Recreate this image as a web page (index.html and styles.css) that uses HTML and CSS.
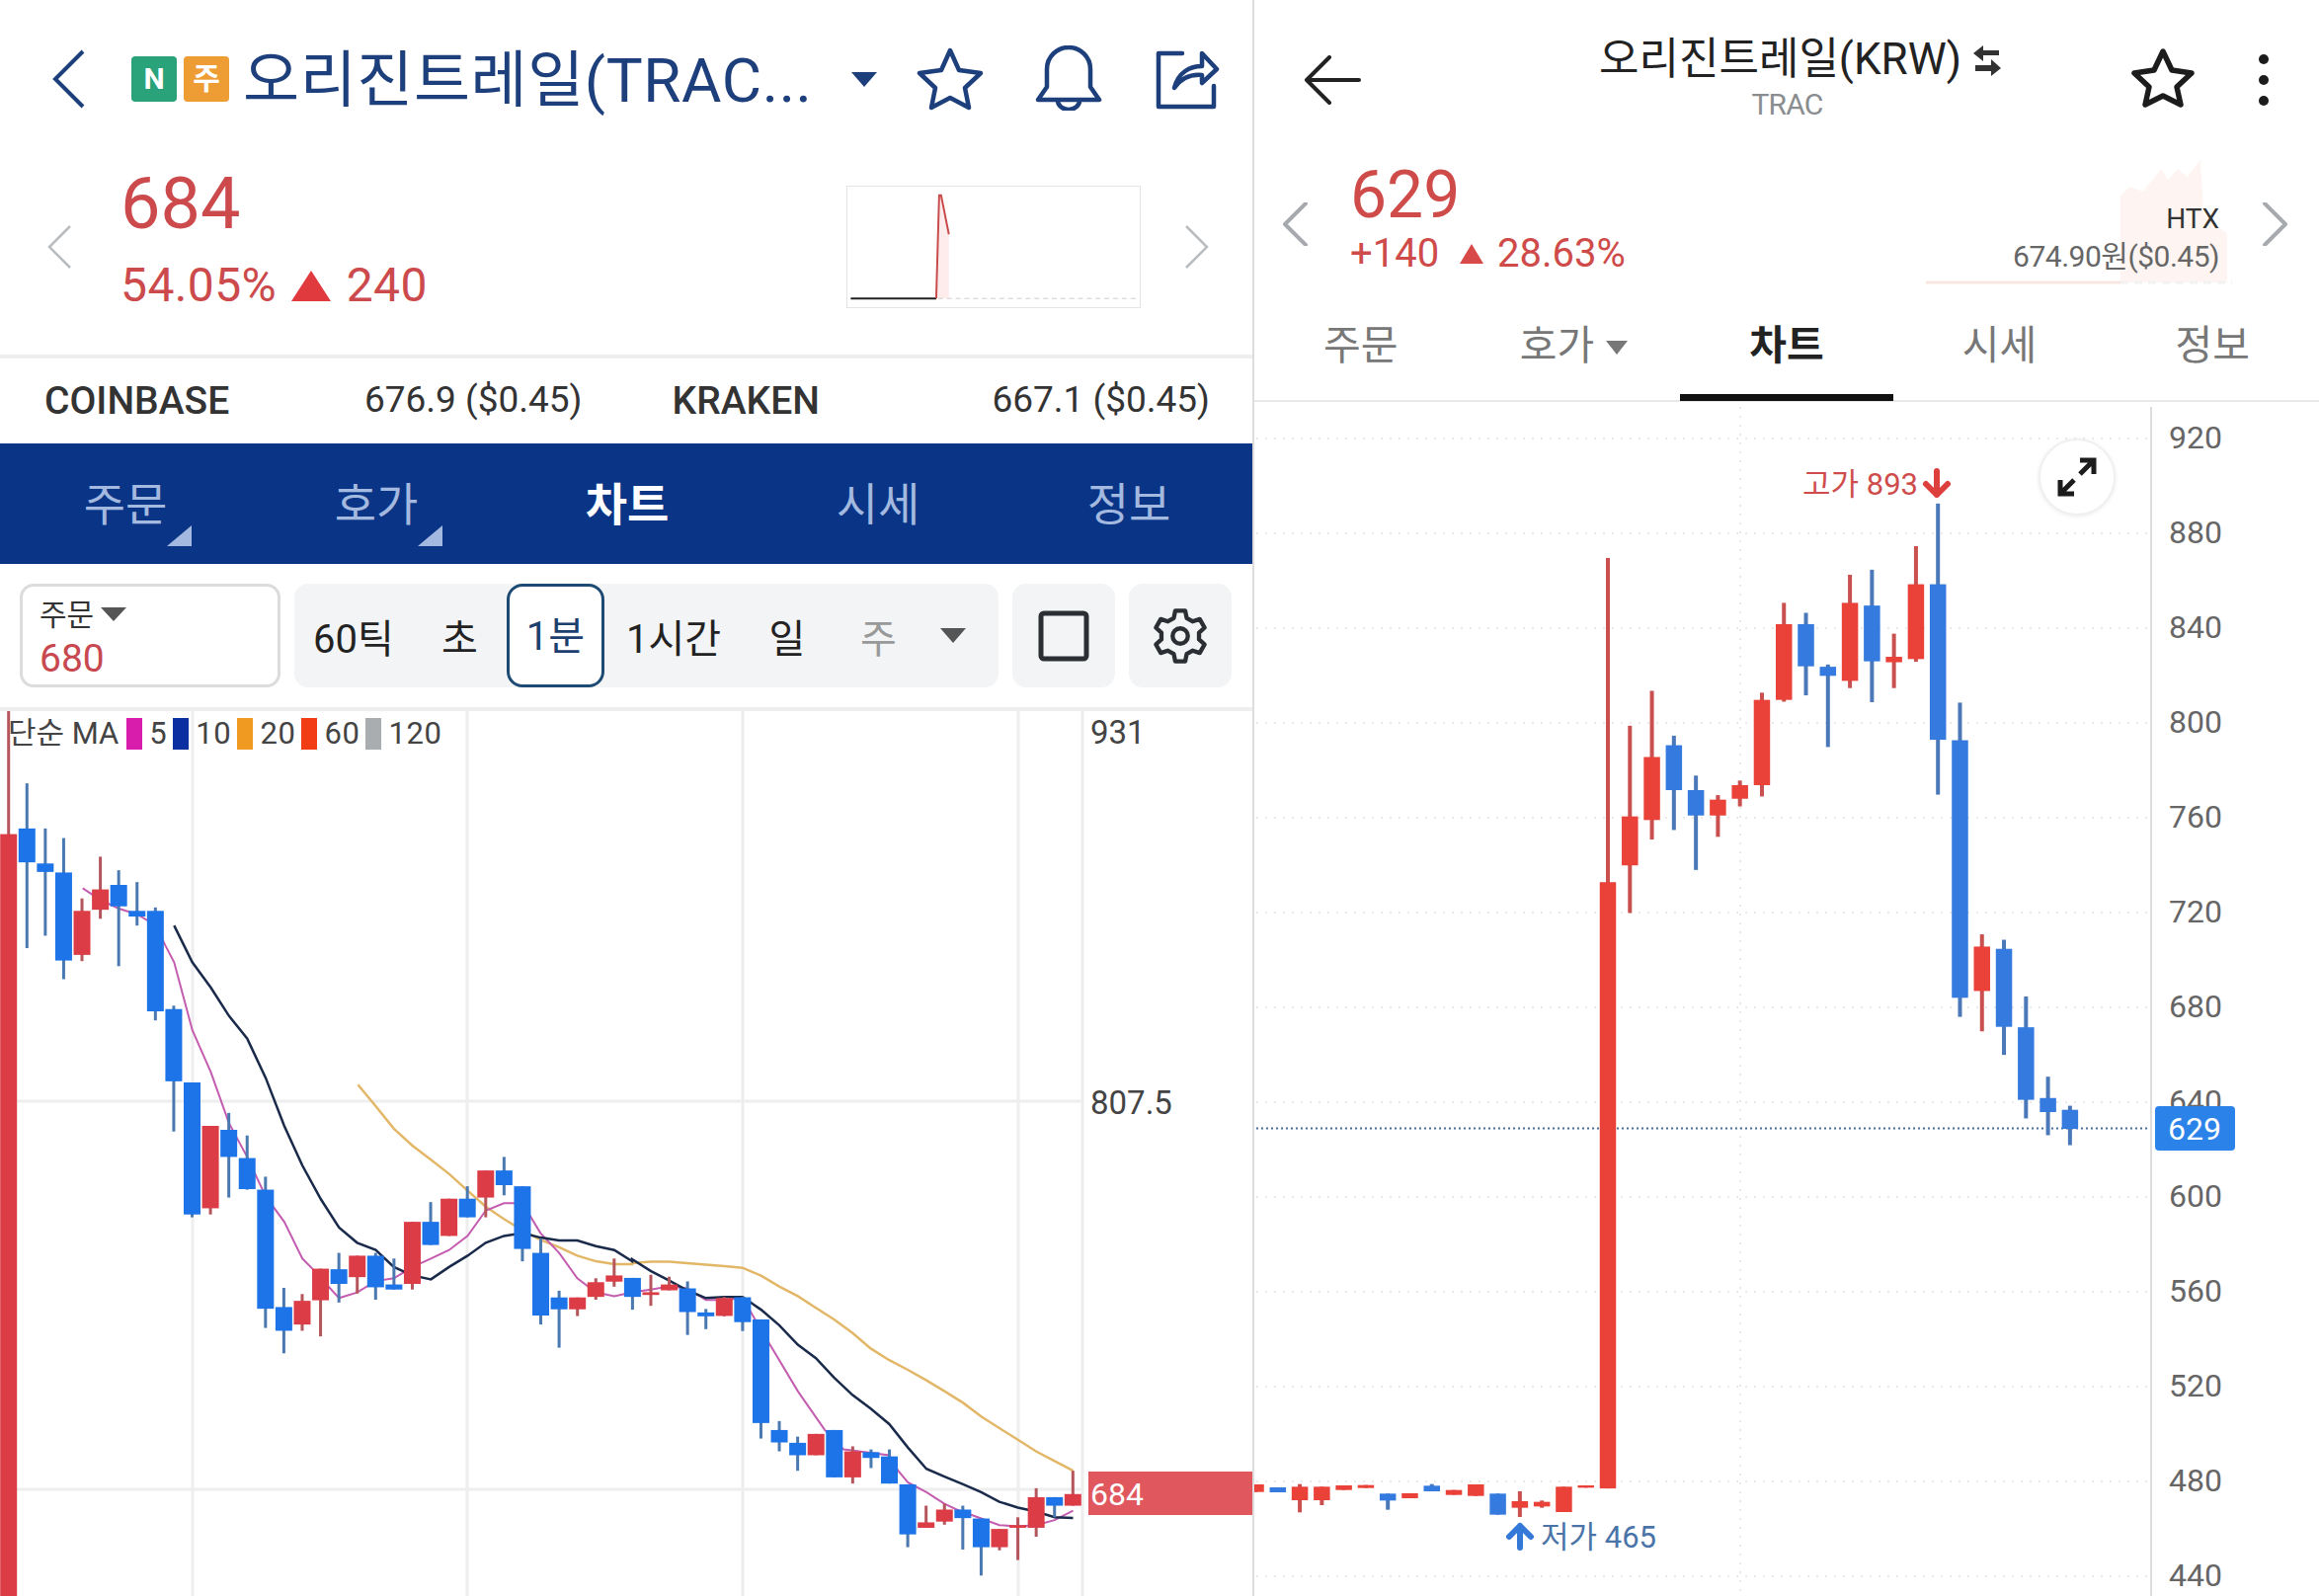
FILE: index.html
```html
<!DOCTYPE html>
<html lang="ko">
<head>
  <meta charset="UTF-8" />
  <title>오리진트레일 TRAC</title>
  <link rel="stylesheet" href="styles.css">
</head>
<body>

  <!-- left app -->
  <section class="panel panel-left">
    <header class="top-left">
      <svg class="back-chevron" viewBox="0 0 36 60"><path d="M32 2 L4 30 L32 58" /></svg>
      <span class="badge badge-n">N</span>
      <span class="badge badge-j">주</span>
      <h1 class="coin-title">오리진트레일(TRAC...</h1>
      <span class="title-arrow"></span>
      <svg class="navy-icon star-left" viewBox="0 0 68 64"><path d="M34 3 L43 23 L65 26 L49 41 L53 61 L34 51 L15 61 L19 41 L3 26 L25 23 Z" /></svg>
      <svg class="navy-icon bell" viewBox="0 0 68 66"><path d="M3 55 L12 42 V24 A22 22 0 0 1 56 24 V42 L65 55 Z" /><path d="M23 56 A11 9 0 0 0 45 56" /></svg>
      <svg class="navy-icon share" viewBox="0 0 66 62"><path d="M28 5 H4 V59 H60 V38" /><path d="M20 40 C24 24 36 18 48 18 V5 L63 21 L48 35 V27 C36 26 27 30 20 40 Z" /></svg>
    </header>

    <div class="price-left">
      <svg class="side-chevron" viewBox="0 0 25 44"><path d="M23 1 L2 22 L23 43" /></svg>
      <div class="price-block">
        <div class="price-big">684</div>
        <div class="price-sub">54.05% <span class="tri-up"></span> 240</div>
      </div>
      <svg class="mini-chart" viewBox="0 0 298 124">
        <path class="mini-fill" d="M91 115 L93 9 L95 9 L103 49 L103 115 Z" />
        <path class="mini-dash" d="M92 115 H296" />
        <path class="mini-base" d="M2 115 H90" />
        <path class="mini-line" d="M90 115 L93 9 L95 9 L103 49" />
      </svg>
      <svg class="side-chevron side-chevron-right" viewBox="0 0 25 44"><path d="M2 1 L23 22 L2 43" /></svg>
    </div>

    <div class="exchanges">
      <div class="exchange"><strong>COINBASE</strong><span>676.9 ($0.45)</span></div>
      <div class="exchange"><strong>KRAKEN</strong><span>667.1 ($0.45)</span></div>
    </div>

    <nav class="tabs-blue">
      <a class="has-corner">주문</a>
      <a class="has-corner">호가</a>
      <a class="active">차트</a>
      <a>시세</a>
      <a>정보</a>
    </nav>

    <div class="toolbar">
      <div class="order-box">
        <div class="order-label">주문<span class="order-arrow"></span></div>
        <div class="order-value">680</div>
      </div>
      <div class="segments">
        <span>60틱</span>
        <span>초</span>
        <span class="selected">1분</span>
        <span>1시간</span>
        <span>일</span>
        <span class="muted">주</span>
        <span class="seg-arrow"></span>
      </div>
      <button class="tool-btn"><svg class="tool-icon" viewBox="0 0 52 52"><rect x="3" y="3" width="46" height="46" rx="3" /></svg></button>
      <button class="tool-btn"><svg class="tool-icon gear" viewBox="0 0 60 60">
        <path d="M23.2 11.2 L24.8 3.5 L35.2 3.5 L36.8 11.2 L42.9 14.7 L50.4 12.3 L55.5 21.2 L49.7 26.5 L49.7 33.5 L55.5 38.8 L50.4 47.7 L42.9 45.3 L36.8 48.8 L35.2 56.5 L24.8 56.5 L23.2 48.8 L17.1 45.3 L9.6 47.7 L4.5 38.8 L10.3 33.5 L10.3 26.5 L4.5 21.2 L9.6 12.3 L17.1 14.7 Z" />
        <circle cx="30" cy="30" r="8" />
      </svg></button>
    </div>

    <div class="chart">
      <svg class="chart-svg" viewBox="0 720 1270 896">
        <g class="grid-left">
          <path d="M195 720 V1616 M473 720 V1616 M752 720 V1616 M1031 720 V1616" />
          <path d="M0 1115 H1096 M0 1508 H1096" />
          <path d="M1096 720 V1616" />
        </g>
        <g id="leftChart"></g>
        <rect class="last-box" x="1102" y="1490" width="167" height="44" />
        <text class="axis-left" x="1104" y="741">931</text>
        <text class="axis-left" x="1104" y="1116">807.5</text>
        <text class="axis-last" x="1104" y="1513">684</text>
      </svg>
      <div class="legend">
        <span class="legend-name">단순 MA</span>
        <i class="swatch sw-5"></i><span>5</span>
        <i class="swatch sw-10"></i><span>10</span>
        <i class="swatch sw-20"></i><span>20</span>
        <i class="swatch sw-60"></i><span>60</span>
        <i class="swatch sw-120"></i><span>120</span>
      </div>
    </div>
  </section>

  <!-- right app -->
  <section class="panel panel-right">
    <header class="top-right">
      <svg class="back-arrow" viewBox="0 0 58 50"><path d="M56 25 H3 M26 2 L3 25 L26 48" /></svg>
      <div class="title-block">
        <h2 class="krw-title">오리진트레일(KRW)
          <svg class="swap" viewBox="0 0 28 32"><path class="swap-fill" d="M0 9 L10 1 V6 H26 V11 H10 V17 Z" /><path class="swap-fill" d="M28 24 L18 32 V27 H2 V21 H18 V15 Z" /></svg>
        </h2>
        <div class="krw-sub">TRAC</div>
      </div>
      <div class="top-right-icons">
        <svg class="star-right" viewBox="0 0 64 60"><path d="M32 3 L41 22 L61 25 L46 39 L50 57 L32 48 L14 57 L18 39 L3 25 L23 22 Z" /></svg>
        <span class="dots"><i></i><i></i><i></i></span>
      </div>
    </header>

    <div class="price-right">
      <svg class="side-chevron-dark" viewBox="0 0 25 44"><path d="M23 1 L2 22 L23 43" /></svg>
      <div class="price-block-right">
        <div class="price-big-right">629</div>
        <div class="price-sub-right">+140 <span class="tri-up tri-small"></span> 28.63%</div>
      </div>
      <svg class="spark" viewBox="0 0 310 128">
        <path class="spark-fill" d="M197 125 L197 37 L207 28 L220 33 L238 10 L245 21 L255 10 L265 18 L278 1 L281 56 L305 76 L305 125 Z" />
        <path class="spark-base" d="M0 125 H197" />
        <path class="spark-dash" d="M197 125 H310" />
      </svg>
      <div class="htx">
        <div class="htx-name">HTX</div>
        <div class="htx-value">674.90원($0.45)</div>
      </div>
      <svg class="side-chevron-dark" viewBox="0 0 25 44"><path d="M2 1 L23 22 L2 43" /></svg>
    </div>

    <nav class="tabs-plain">
      <a>주문</a>
      <a>호가<span class="tab-arrow"></span></a>
      <a class="active">차트</a>
      <a>시세</a>
      <a>정보</a>
    </nav>

    <div class="chart">
      <svg class="chart-svg" viewBox="1270 407 1078 1209">
        <g class="grid-right" id="rightGrid"></g>
        <g id="rightAxis"></g>
        <path class="price-line" d="M1272 1142.5 H2178" />
        <g id="rightChart"></g>
        <path class="axis-line" d="M2178 412 V1616" />
        <rect class="now-box" x="2182" y="1120" width="81" height="45" rx="4" />
        <text class="now-text" x="2222" y="1143">629</text>
        <text class="mark-high" x="1825" y="490">고가 893</text>
        <path class="mark-high-arrow" d="M1961 477 V501 M1950 490 L1961 501 L1972 490" />
        <path class="mark-low-arrow" d="M1539 1567 V1545 M1528 1556 L1539 1545 L1550 1556" />
        <text class="mark-low" x="1560" y="1556">저가 465</text>
      </svg>
      <button class="expand-btn">
        <svg viewBox="0 0 42 42"><path d="M24 18 L36 6 M24 4 H38 V18 M18 24 L6 36 M4 24 V38 H18" /></svg>
      </button>
    </div>
  </section>

  <script src="script.js"></script>
</body>
</html>
```

FILE: styles.css
```css
html, body {
  margin: 0;
  padding: 0;
  height: 1616px;
  overflow: hidden;
  background: #fff;
  font-family: Roboto, "Noto Sans CJK KR", sans-serif;
  color: #333;
}
body {
  display: flex;
}
.panel {
  display: flex;
  flex-direction: column;
  height: 1616px;
}
.panel-left {
  width: 1270px;
}
.panel-right {
  position: relative;
  flex: 1;
  box-shadow: -2px 0 0 #ddd;
}
h1, h2 {
  margin: 0;
  font-weight: 400;
}

/* left header */
.top-left {
  display: flex;
  align-items: center;
  height: 160px;
  padding-left: 52px;
  color: #1d3f7c;
  box-sizing: border-box;
}
.back-chevron {
  width: 36px;
  height: 60px;
  margin-right: 45px;
  fill: none;
  stroke: #1d3f7c;
  stroke-width: 4;
}
.badge {
  width: 46px;
  height: 46px;
  border-radius: 4px;
  color: #fff;
  font-size: 30px;
  font-weight: 700;
  line-height: 46px;
  text-align: center;
  margin-right: 7px;
}
.badge-n { background: #2aa37a; }
.badge-j { background: #ee9c34; }
.coin-title {
  width: 600px;
  margin-left: 7px;
  font-size: 62px;
  line-height: 80px;
  letter-spacing: 0.6px;
  white-space: nowrap;
  margin-top: 4px;
}
.title-arrow {
  width: 0;
  height: 0;
  border-left: 13px solid transparent;
  border-right: 13px solid transparent;
  border-top: 15px solid #1d3f7c;
  margin-left: 16px;
}
.navy-icon {
  fill: none;
  stroke: #1d3f7c;
  stroke-width: 4.5;
  stroke-linejoin: round;
  stroke-linecap: round;
}
.star-left { width: 68px; height: 64px; margin-left: 40px; }
.bell { width: 68px; height: 66px; margin: -2px 0 0 52px; }
.share { width: 66px; height: 62px; margin-left: 53px; }

/* left price */
.price-left {
  display: flex;
  align-items: center;
  height: 203px;
  padding: 0 46px 20px 48px;
  border-bottom: 4px solid #eee;
  box-sizing: border-box;
}
.side-chevron {
  width: 25px;
  height: 44px;
  margin-right: 49px;
  fill: none;
  stroke: #b9bdc0;
  stroke-width: 2.5;
  flex-shrink: 0;
}
.side-chevron-right {
  margin: 0 0 0 44px;
}
.price-block {
  margin-bottom: 15px;
  color: #cc4a4c;
}
.price-big {
  font-size: 72px;
  line-height: 80px;
}
.price-sub {
  margin-top: 14px;
  font-size: 48px;
  line-height: 56px;
  letter-spacing: 0.4px;
  white-space: nowrap;
}
.tri-up {
  display: inline-block;
  width: 0;
  height: 0;
  border-left: 20px solid transparent;
  border-right: 20px solid transparent;
  border-bottom: 31px solid #e0393e;
  margin: 0 3px;
}
.tri-small {
  border-left-width: 12px;
  border-right-width: 12px;
  border-bottom-width: 20px;
  border-bottom-color: #d84a48;
  margin: 0 4px 0 11px;
  vertical-align: 3px;
}
.price-sub-right {
  letter-spacing: 0;
}
.mini-chart {
  width: 298px;
  height: 124px;
  margin-left: auto;
  border: 1px solid #e4e4e4;
  box-sizing: border-box;
}
.mini-fill { fill: #fdeceb; }
.mini-dash { fill: none; stroke: #ddd; stroke-width: 1.5; stroke-dasharray: 5 4; }
.mini-base { fill: none; stroke: #222; stroke-width: 2; }
.mini-line { fill: none; stroke: #c84a4a; stroke-width: 2; }

/* exchanges */
.exchanges {
  display: grid;
  grid-template-columns: 1fr 1fr;
  gap: 91px;
  align-items: center;
  height: 86px;
  padding: 0 45px 0 45px;
  font-size: 37px;
  color: #333;
  flex-shrink: 0;
}
.exchange {
  display: flex;
  justify-content: space-between;
  white-space: nowrap;
}
.exchange strong {
  font-weight: 500;
  font-size: 39px;
}
/* left tabs */
.tabs-blue {
  display: flex;
  height: 122px;
  background: #0a3587;
  flex-shrink: 0;
}
.tabs-blue a {
  position: relative;
  flex: 1;
  text-align: center;
  font-size: 46px;
  line-height: 124px;
  color: #a3b9df;
}
.tabs-blue a.active {
  color: #fff;
  font-weight: 700;
}
.has-corner::after {
  content: "";
  position: absolute;
  right: 60px;
  bottom: 18px;
  width: 25px;
  height: 21px;
  background: #a3b9df;
  clip-path: polygon(100% 0, 100% 100%, 0 100%);
}

/* toolbar */
.toolbar {
  display: flex;
  gap: 14px;
  height: 149px;
  padding: 20px 20px 0;
  border-bottom: 4px solid #eee;
  box-sizing: border-box;
  flex-shrink: 0;
}
.order-box {
  width: 264px;
  height: 105px;
  border: 3px solid #dcdcdc;
  border-radius: 14px;
  padding-left: 17px;
  box-sizing: border-box;
  flex-shrink: 0;
}
.order-label {
  font-size: 30px;
  line-height: 38px;
  margin-top: 10px;
  color: #333;
}
.order-arrow {
  display: inline-block;
  width: 0;
  height: 0;
  border-left: 13px solid transparent;
  border-right: 13px solid transparent;
  border-top: 14px solid #555;
  margin-left: 7px;
  vertical-align: 4px;
}
.order-value {
  font-size: 39px;
  line-height: 50px;
  color: #c8484f;
}
.segments {
  display: grid;
  grid-template-columns: 120px 95px 99px 140px 90px 95px 1fr;
  align-items: center;
  width: 713px;
  height: 105px;
  background: #f2f4f6;
  border-radius: 14px;
  font-size: 40px;
  color: #222;
  text-align: center;
  flex-shrink: 0;
}
.segments .selected {
  height: 105px;
  line-height: 102px;
  border: 3px solid #1d4a72;
  border-radius: 16px;
  box-sizing: border-box;
  background: #fff;
  color: #1d3f6e;
}
.segments .muted {
  color: #999;
}
.seg-arrow {
  width: 0;
  height: 0;
  border-left: 13px solid transparent;
  border-right: 13px solid transparent;
  border-top: 15px solid #555;
  margin-left: 15px;
}
.tool-btn {
  display: flex;
  align-items: center;
  justify-content: center;
  width: 104px;
  height: 105px;
  padding: 0;
  border: none;
  border-radius: 14px;
  background: #f2f4f6;
}
.tool-icon {
  width: 52px;
  height: 52px;
  fill: none;
  stroke: #2b2f33;
  stroke-width: 5;
}
.gear {
  width: 58px;
  height: 58px;
  stroke-width: 4.5;
  stroke-linejoin: round;
}

/* charts */
.chart {
  position: relative;
  flex: 1;
  min-height: 0;
  overflow: hidden;
}
.chart-svg {
  position: absolute;
  left: 0;
  top: 0;
  width: 100%;
  height: 100%;
}
.chart-svg text {
  dominant-baseline: central;
  font-size: 32px;
}
.grid-left path {
  fill: none;
  stroke: #eeeeee;
  stroke-width: 3;
}
.axis-left { fill: #444; }
.chart-svg .axis-left { font-size: 33px; }
.axis-last { fill: #fff; }
.last-box { fill: #e0575e; }
.legend {
  position: absolute;
  left: 8px;
  top: 7px;
  display: flex;
  align-items: center;
  font-size: 31px;
  line-height: 32px;
  letter-spacing: 0.6px;
  color: #444;
}
.legend-name {
  margin-right: 2px;
  letter-spacing: 0;
  white-space: nowrap;
}
.swatch {
  width: 16px;
  height: 32px;
  margin: 0 7px 0 0;
}
.legend span + .swatch {
  margin-left: 6px;
}
.sw-5 { background: #d81cab; }
.sw-10 { background: #0b2ea0; }
.sw-20 { background: #f09a22; }
.sw-60 { background: #f23c15; }
.sw-120 { background: #aaadb0; }

/* right header */
.top-right {
  display: grid;
  grid-template-columns: 1fr auto 1fr;
  align-items: center;
  height: 142px;
  padding: 0 49px 0 50px;
  flex-shrink: 0;
}
.back-arrow {
  width: 58px;
  height: 50px;
  fill: none;
  stroke: #222;
  stroke-width: 4;
  stroke-linecap: round;
  stroke-linejoin: round;
  margin-top: 20px;
}
.title-block {
  position: relative;
  text-align: center;
}
.krw-title {
  position: relative;
  left: -7px;
  font-size: 44px;
  line-height: 60px;
  color: #222;
  white-space: nowrap;
  margin-top: 13px;
}
.swap {
  position: absolute;
  left: calc(100% + 12px);
  top: 15px;
  width: 28px;
  height: 32px;
}
.swap-fill { fill: #333; }
.krw-sub {
  font-size: 30px;
  line-height: 38px;
  letter-spacing: -0.8px;
  color: #8a8d90;
  margin-top: -3px;
}
.top-right-icons {
  display: flex;
  align-items: center;
  justify-content: flex-end;
  margin-top: 20px;
}
.star-right {
  width: 64px;
  height: 60px;
  margin-top: -4px;
  fill: none;
  stroke: #1c1c1c;
  stroke-width: 5.5;
  stroke-linejoin: round;
}
.dots {
  display: flex;
  flex-direction: column;
  gap: 11px;
  margin: 0 2px 0 65px;
}
.dots i {
  width: 10px;
  height: 10px;
  border-radius: 50%;
  background: #1c1c1c;
}

/* right price */
.price-right {
  position: relative;
  display: flex;
  align-items: center;
  height: 158px;
  padding: 0 32px 0 29px;
  flex-shrink: 0;
}
.side-chevron-dark {
  width: 25px;
  height: 44px;
  fill: none;
  stroke: #a6aaae;
  stroke-width: 4;
  stroke-linecap: round;
  stroke-linejoin: round;
  flex-shrink: 0;
  margin-top: 12px;
}
.price-block-right {
  margin-left: 43px;
  color: #cf4b4a;
}
.price-big-right {
  font-size: 66px;
  line-height: 70px;
}
.price-sub-right {
  font-size: 40px;
  line-height: 46px;
  margin-top: 1px;
  white-space: nowrap;
}
.spark {
  position: absolute;
  left: 680px;
  top: 19px;
  width: 310px;
  height: 128px;
}
.spark-fill { fill: #fef5f2; }
.spark-base { fill: none; stroke: #f9e6e0; stroke-width: 3; }
.spark-dash { fill: none; stroke: #f2f2f2; stroke-width: 3; stroke-dasharray: 8 6; }
.htx {
  position: relative;
  margin-left: auto;
  margin-right: 44px;
  text-align: right;
  margin-top: 41px;
}
.htx-name {
  font-size: 28px;
  line-height: 36px;
  color: #333;
}
.htx-value {
  font-size: 30px;
  line-height: 40px;
  color: #666;
  white-space: nowrap;
  letter-spacing: -0.5px;
}
.tabs-plain {
  display: flex;
  height: 107px;
  border-bottom: 2px solid #e8e8e8;
  box-sizing: border-box;
  flex-shrink: 0;
}
.tabs-plain a {
  flex: 1;
  text-align: center;
  font-size: 41px;
  line-height: 100px;
  color: #777;
}
.tabs-plain a.active {
  color: #222;
  font-weight: 700;
  height: 106px;
  border-bottom: 7px solid #111;
  box-sizing: border-box;
}
.tab-arrow {
  display: inline-block;
  width: 0;
  height: 0;
  border-left: 11px solid transparent;
  border-right: 11px solid transparent;
  border-top: 14px solid #777;
  margin-left: 12px;
  vertical-align: 5px;
}
.grid-right path {
  fill: none;
  stroke: #e9e9e9;
  stroke-width: 2;
  stroke-dasharray: 2 7;
}
.axis-right { fill: #666; }
.axis-line { fill: none; stroke: #ddd; stroke-width: 2; }
.price-line {
  fill: none;
  stroke: #4a6e9c;
  stroke-width: 2;
  stroke-dasharray: 2 3;
}
.now-box { fill: #2b83ea; }
.chart-svg .now-text { fill: #fff; text-anchor: middle; }
.chart-svg .mark-high { fill: #cf4c4c; font-size: 31px; }
.chart-svg .mark-low { fill: #4a74a8; font-size: 31px; }
.mark-high-arrow {
  fill: none;
  stroke: #dd3f3c;
  stroke-width: 6;
  stroke-linecap: round;
  stroke-linejoin: round;
}
.mark-low-arrow {
  fill: none;
  stroke: #3478d8;
  stroke-width: 6;
  stroke-linecap: round;
  stroke-linejoin: round;
}
.expand-btn {
  position: absolute;
  left: 794px;
  top: 37px;
  width: 78px;
  height: 78px;
  padding: 0;
  border: 2px solid #f0f0f0;
  border-radius: 50%;
  background: #fff;
  box-shadow: 0 1px 4px rgba(0, 0, 0, 0.08);
  display: flex;
  align-items: center;
  justify-content: center;
}
.expand-btn svg {
  width: 42px;
  height: 42px;
  fill: none;
  stroke: #1c1c1c;
  stroke-width: 5;
}
```

FILE: script.js
```js
const SVG_NS = 'http://www.w3.org/2000/svg';

function addNode(parent, tag, attrs) {
  const node = document.createElementNS(SVG_NS, tag);
  for (const key in attrs) node.setAttribute(key, attrs[key]);
  parent.appendChild(node);
  return node;
}

// [wickTop, bodyTop, bodyBottom, wickBottom, 'r' or 'b']
const leftUpper = [
  [0, 218, 1568, 1568, 'r'],
  [128, 208, 268, 420, 'b'], [208, 270, 285, 398, 'b'], [225, 286, 442, 475, 'b'],
  [332, 354, 432, 443, 'r'], [258, 316, 352, 368, 'r'], [282, 308, 346, 452, 'b'],
  [303, 354, 364, 380, 'b'], [348, 354, 532, 548, 'b'], [522, 528, 656, 745, 'b'],
  [658, 658, 892, 897, 'b'], [735, 735, 881, 892, 'r'], [712, 742, 790, 862, 'b'],
  [752, 792, 847, 848, 'b'], [825, 848, 1059, 1093, 'b'], [1022, 1056, 1098, 1138, 'b'],
  [1033, 1045, 1087, 1098, 'r'], [988, 988, 1044, 1108, 'r'], [960, 989, 1015, 1048, 'b'],
  [965, 965, 1003, 1032, 'r'], [960, 965, 1021, 1043, 'b'], [970, 1016, 1025, 1025, 'b'],
  [905, 905, 1015, 1025, 'r'], [870, 905, 946, 946, 'b'], [864, 864, 930, 930, 'r'],
  [842, 864, 897, 897, 'b'], [814, 814, 862, 897, 'r'], [790, 814, 840, 858, 'b'],
  [842, 842, 953, 975, 'b'], [935, 960, 1071, 1087, 'b'], [1027, 1039, 1060, 1128, 'b'],
  [1039, 1039, 1060, 1072, 'r'], [1005, 1012, 1038, 1043, 'r'], [970, 1000, 1011, 1020, 'r']
];
const leftLower = [
  [748, 748, 797, 830, 'b'], [740, 785, 792, 820, 'r'], [745, 765, 780, 780, 'r'],
  [757, 775, 836, 895, 'b'], [828, 837, 847, 880, 'b'], [797, 800, 846, 847, 'r'],
  [797, 798, 862, 885, 'b'], [855, 855, 1122, 1162, 'b'], [1117, 1140, 1172, 1195, 'b'],
  [1157, 1173, 1205, 1245, 'b'], [1150, 1150, 1205, 1205, 'r'], [1140, 1140, 1262, 1262, 'b'],
  [1182, 1195, 1262, 1278, 'r'], [1190, 1197, 1212, 1238, 'b'], [1190, 1208, 1278, 1278, 'b'],
  [1280, 1280, 1409, 1442, 'b'], [1335, 1378, 1392, 1392, 'r'], [1330, 1345, 1376, 1384, 'r'],
  [1335, 1345, 1367, 1448, 'b'], [1368, 1368, 1442, 1515, 'b'], [1395, 1395, 1442, 1450, 'r'],
  [1365, 1385, 1392, 1475, 'r'], [1290, 1313, 1392, 1415, 'r'], [1313, 1313, 1335, 1365, 'b'],
  [1245, 1305, 1335, 1335, 'r']
];
const rightUpper = [
  [185, 900, 2237, 2237, 'r'],
  [555, 755, 863, 968, 'r'], [478, 624, 763, 806, 'r'], [577, 598, 697, 785, 'b'],
  [665, 697, 753, 873, 'b'], [708, 718, 753, 800, 'r'], [676, 686, 716, 733, 'r'],
  [482, 498, 686, 711, 'r'], [284, 331, 498, 502, 'r'], [306, 331, 424, 488, 'b'],
  [420, 425, 445, 602, 'b'], [222, 284, 456, 472, 'r'], [211, 290, 413, 503, 'b'],
  [352, 403, 415, 472, 'r'], [159, 243, 408, 414, 'r'], [65, 243, 586, 707, 'b'],
  [504, 587, 1155, 1197, 'b'], [1015, 1042, 1140, 1229, 'r'], [1027, 1047, 1219, 1281, 'b'],
  [1152, 1220, 1380, 1421, 'b'], [1329, 1376, 1407, 1458, 'b'], [1393, 1402, 1444, 1480, 'b']
];
// the quiet stretch before the spike, newest first
const rightLower = [
  [372, 372, 379, 379, 'r'], [376, 376, 453, 453, 'r'], [418, 422, 436, 440, 'r'],
  [390, 420, 440, 468, 'r'], [397, 397, 461, 461, 'b'], [369, 369, 404, 404, 'r'],
  [386, 386, 401, 401, 'r'], [368, 373, 390, 390, 'b'], [396, 396, 411, 411, 'r'],
  [397, 397, 418, 446, 'b'], [371, 371, 380, 380, 'r'], [372, 372, 386, 386, 'r'],
  [376, 376, 417, 432, 'r'], [368, 376, 417, 454, 'r'], [378, 378, 393, 393, 'b'],
  [369, 369, 392, 392, 'r']
];

const leftStyle = { width: 17, wick: 3, r: '#dc3c46', b: '#1c74e8', rw: '#b5555c', bw: '#4a78b0' };
const rightStyle = { width: 16.5, wick: 4, r: '#ea4238', b: '#347adf', rw: '#c9504f', bw: '#4a78b8' };

function drawCandle(g, x, c, toY, style) {
  addNode(g, 'rect', {
    x: x - style.wick / 2, y: toY(c[0]), width: style.wick, height: toY(c[3]) - toY(c[0]),
    fill: style[c[4] + 'w']
  });
  addNode(g, 'rect', {
    x: x - style.width / 2, y: toY(c[1]), width: style.width, height: toY(c[2]) - toY(c[1]),
    fill: style[c[4]]
  });
}

const leftY1 = v => 720 + v / 1.75;
const leftY2 = v => 1000 + v / 2.545;
const leftG = document.getElementById('leftChart');

function drawLine(upper, lower, color, width) {
  const pts = upper.map(p => (p[0] / 2.45).toFixed(1) + ',' + leftY1(p[1]).toFixed(1))
    .concat(lower.map(p => (p[0] / 2.45 + 640).toFixed(1) + ',' + leftY2(p[1]).toFixed(1)));
  addNode(leftG, 'polyline', { points: pts.join(' '), fill: 'none', stroke: color, 'stroke-width': width });
}

// moving averages
drawLine(
  [[888,662],[932,700],[977,740],[1023,770],[1069,795],[1114,820],[1160,850],[1205,878],[1250,900],[1296,920],[1341,937],[1387,950],[1432,965],[1478,975],[1524,980],[1568,980]],
  [[0,710],[46,706],[92,706],[137,710],[183,714],[229,718],[274,722],[320,742],[365,770],[411,795],[456,825],[501,855],[547,890],[592,930],[638,960],[684,985],[730,1012],[775,1040],[821,1070],[866,1105],[911,1135],[957,1165],[1002,1195],[1048,1220],[1094,1245]],
  '#e3b768', 2.5
);
drawLine(
  [[205,314],[250,335],[295,350],[340,360],[387,380],[410,415],[432,445],[477,565],[523,640],[568,730],[613,790],[659,860],[705,905],[750,970],[775,988],[796,1005],[841,1040],[886,1030],[932,1010],[977,1005],[1023,985],[1069,970],[1114,955],[1160,930],[1205,885],[1250,872],[1296,872],[1341,925],[1387,960],[1432,1005],[1478,1030],[1524,1037],[1568,1030]],
  [[46,778],[92,770],[137,775],[183,805],[229,805],[274,800],[342,920],[411,1040],[478,1140],[525,1190],[638,1205],[660,1245],[684,1275],[730,1300],[775,1330],[805,1345],[866,1368],[911,1385],[957,1388],[1002,1385],[1048,1372],[1094,1348]],
  '#c45cb0', 2
);
drawLine(
  [[432,380],[477,445],[523,490],[568,540],[613,580],[659,650],[705,735],[750,805],[796,865],[841,915],[886,942],[932,955],[977,985],[1023,1000],[1069,1007],[1114,985],[1160,965],[1205,942],[1250,930],[1296,925],[1341,933],[1387,938],[1432,938],[1478,948],[1524,955],[1568,975]],
  [[0,700],[46,730],[92,755],[137,780],[183,800],[229,797],[274,797],[320,830],[365,870],[411,920],[456,955],[501,1005],[547,1050],[592,1085],[638,1125],[684,1185],[730,1240],[775,1260],[821,1280],[866,1300],[911,1325],[957,1340],[1002,1350],[1048,1365],[1094,1367]],
  '#1a2a4a', 2.5
);

leftUpper.forEach((c, i) => drawCandle(leftG, 8.7 + i * 18.58, c, leftY1, leftStyle));
leftLower.forEach((c, i) => drawCandle(leftG, 640.4 + i * 18.58, c, leftY2, leftStyle));

// right chart
const rightG = document.getElementById('rightChart');
rightUpper.forEach((c, i) => drawCandle(rightG, 1628 + i * 22.28, c, v => 480 + v / 2.178, rightStyle));
rightLower.forEach((c, i) => drawCandle(rightG, 1628 - (i + 1) * 22.28, c, v => 1380 + v / 3, rightStyle));

const gridG = document.getElementById('rightGrid');
const axisG = document.getElementById('rightAxis');
for (let i = 0; i < 13; i++) {
  const y = 444 + i * 96;
  addNode(gridG, 'path', { d: 'M1272 ' + y + ' H2178' });
  const label = addNode(axisG, 'text', { class: 'axis-right', x: 2196, y: y - 1 });
  label.textContent = 920 - i * 40;
}
addNode(gridG, 'path', { d: 'M1762 412 V1616' });
```
